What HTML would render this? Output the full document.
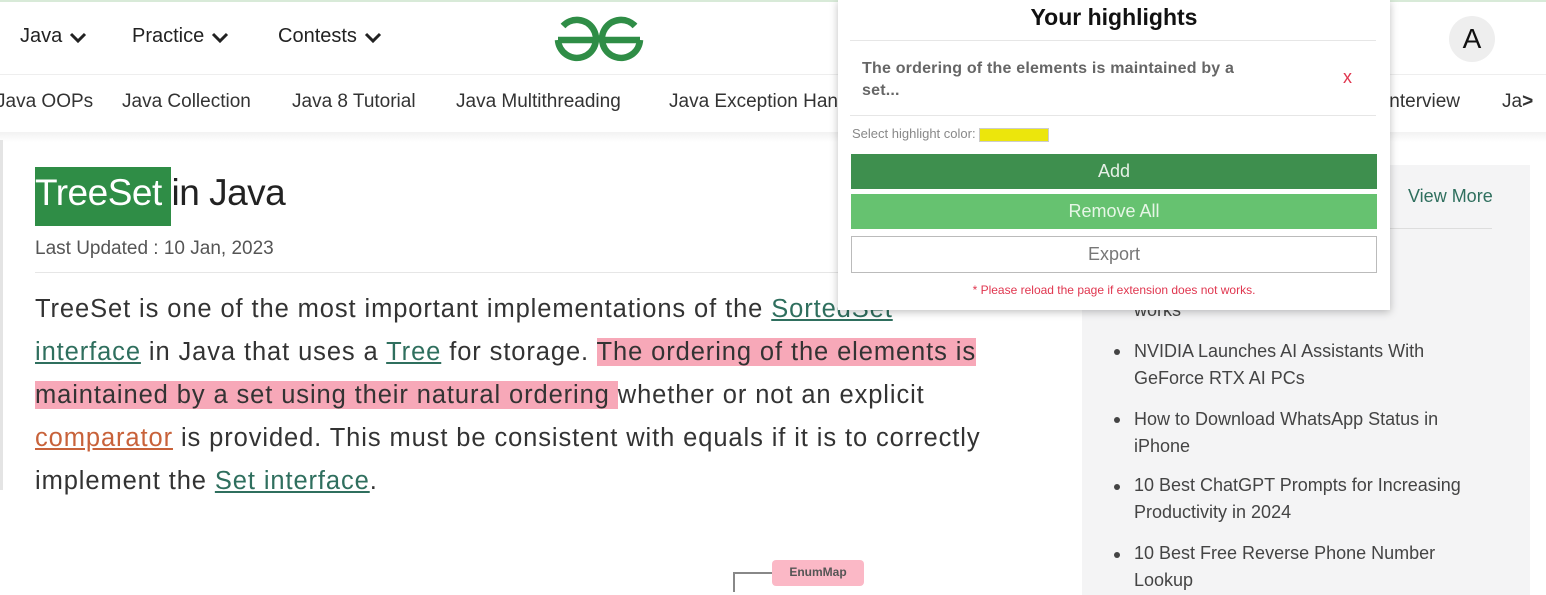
<!DOCTYPE html>
<html><head><meta charset="utf-8"><style>
*{margin:0;padding:0;box-sizing:border-box}
body{width:1546px;height:584px;overflow:hidden;background:#fff;font-family:"Liberation Sans",sans-serif;position:relative;color:#222}
.a{position:absolute;white-space:nowrap}
.nav{font-size:20px;color:#222;top:25px}
.sub{font-size:19px;color:#333;top:91px}
.p{font-size:25.5px;letter-spacing:0.9px;color:#333;left:35px}
u{color:#2f6f5e;text-decoration:underline}
.hl{background:#f7a8b8}
.side{font-size:18px;color:#444;line-height:27px}
.bul{position:absolute;width:6px;height:6px;border-radius:50%;background:#444}
.chev{display:inline-block;vertical-align:middle;margin-left:6px}
</style></head><body>
<div class="a" style="left:0;top:0;width:1546px;height:2px;background:#d8ead8"></div>
<div class="a nav" style="left:20px">Java<svg class="chev" width="20" height="14" viewBox="0 0 20 14"><path d="M3 4 L10 11 L17 4" fill="none" stroke="#222" stroke-width="3"/></svg></div>
<div class="a nav" style="left:132px">Practice<svg class="chev" width="20" height="14" viewBox="0 0 20 14"><path d="M3 4 L10 11 L17 4" fill="none" stroke="#222" stroke-width="3"/></svg></div>
<div class="a nav" style="left:278px">Contests<svg class="chev" width="20" height="14" viewBox="0 0 20 14"><path d="M3 4 L10 11 L17 4" fill="none" stroke="#222" stroke-width="3"/></svg></div>
<svg class="a" style="left:553px;top:13px" width="92" height="50" viewBox="0 0 92 50"><g fill="none" stroke="#2f8d46" stroke-width="6.5"><path d="M5 27 H43"/><path d="M10 13 A19 19 0 1 1 5 27"/><path d="M49 27 H87"/><path d="M82 13 A19 19 0 1 0 87 27"/></g></svg>
<div class="a" style="left:1449px;top:16px;width:46px;height:46px;border-radius:50%;background:#eee;font-size:28px;text-align:center;line-height:46px;color:#111">A</div>
<div class="a" style="left:0;top:74px;width:1546px;height:1px;background:#eee"></div>
<div class="a sub" style="left:-4px">Java OOPs</div>
<div class="a sub" style="left:122px">Java Collection</div>
<div class="a sub" style="left:292px">Java 8 Tutorial</div>
<div class="a sub" style="left:456px">Java Multithreading</div>
<div class="a sub" style="left:669px">Java Exception Handling</div>
<div class="a sub" style="left:1384px">Interview</div>
<div class="a sub" style="left:1502px">Ja<b>&gt;</b></div>
<div class="a" style="left:0;top:132px;width:1546px;height:10px;background:linear-gradient(#f2f2f2,#fff)"></div>
<div class="a" style="left:0;top:140px;width:3px;height:350px;background:#e4e4e4"></div>
<div class="a" style="left:35px;top:167px;width:136px;height:59px;background:#2f8d46"></div>
<div class="a" style="left:35px;top:172px;font-size:37px;color:#fff;letter-spacing:-0.5px">TreeSet<span style="color:#222"> in Java</span></div>
<div class="a" style="left:35px;top:238px;font-size:19px;color:#555">Last Updated : 10 Jan, 2023</div>
<div class="a" style="left:35px;top:272px;width:1030px;height:1px;background:#e6e6e6"></div>
<div class="a p" style="top:295px">TreeSet is one of the most important implementations of the <u>SortedSet</u></div>
<div class="a p" style="top:338px"><u>interface</u> in Java that uses a <u>Tree</u> for storage. <span class="hl">The ordering of the elements is</span></div>
<div class="a p" style="top:381px"><span class="hl">maintained by a set using their natural ordering </span>whether or not an explicit</div>
<div class="a p" style="top:424px"><u style="color:#c8623a">comparator</u> is provided. This must be consistent with equals if it is to correctly</div>
<div class="a p" style="top:467px">implement the <u>Set interface</u>.</div>
<div class="a" style="left:733px;top:572px;width:40px;height:20px;border-left:2px solid #888;border-top:2px solid #888"></div>
<div class="a" style="left:772px;top:560px;width:92px;height:26px;background:#fbb8c6;border-radius:4px;font-size:12px;text-align:center;line-height:24px;color:#555;font-weight:bold">EnumMap</div>
<div class="a" style="left:1082px;top:165px;width:448px;height:430px;background:#f4f4f5"></div>
<div class="a" style="left:1408px;top:186px;font-size:18px;color:#2f6f5e">View More</div>
<div class="a" style="left:1100px;top:228px;width:392px;height:1px;background:#ddd"></div>
<div class="a side" style="left:1134px;top:243px">you for<br>and how it<br>works</div>
<div class="bul" style="left:1114px;top:349px"></div>
<div class="a side" style="left:1134px;top:338px">NVIDIA Launches AI Assistants With<br>GeForce RTX AI PCs</div>
<div class="bul" style="left:1114px;top:417px"></div>
<div class="a side" style="left:1134px;top:406px">How to Download WhatsApp Status in<br>iPhone</div>
<div class="bul" style="left:1114px;top:484px"></div>
<div class="a side" style="left:1134px;top:472px">10 Best ChatGPT Prompts for Increasing<br>Productivity in 2024</div>
<div class="bul" style="left:1114px;top:552px"></div>
<div class="a side" style="left:1134px;top:540px">10 Best Free Reverse Phone Number<br>Lookup</div>
<!-- popup -->
<div class="a" style="left:838px;top:0;width:552px;height:310px;background:#fff;box-shadow:0 2px 8px rgba(0,0,0,.25)">
<div class="a" style="left:0;width:552px;top:4px;text-align:center;font-size:23px;font-weight:bold;color:#111">Your highlights</div>
<div class="a" style="left:12px;top:40px;width:526px;height:1px;background:#e6e6e6"></div>
<div class="a" style="left:24px;top:58px;font-size:16px;font-weight:bold;color:#666;line-height:22px;letter-spacing:0.2px">The ordering of the elements is maintained by a<br>set...</div>
<div class="a" style="left:505px;top:67px;font-size:18px;color:#e0364f">x</div>
<div class="a" style="left:12px;top:115px;width:526px;height:1px;background:#e6e6e6"></div>
<div class="a" style="left:14px;top:126px;font-size:13px;color:#888">Select highlight color: <span style="display:inline-block;width:70px;height:14px;background:#ece60c;vertical-align:middle;border:1px solid #ccc"></span></div>
<div class="a" style="left:13px;top:154px;width:526px;height:35px;background:#3e8f4e;color:#e6f0e6;font-size:18px;text-align:center;line-height:35px">Add</div>
<div class="a" style="left:13px;top:194px;width:526px;height:35px;background:#66c270;color:#e6f6e6;font-size:18px;text-align:center;line-height:35px">Remove All</div>
<div class="a" style="left:13px;top:236px;width:526px;height:37px;border:1px solid #bbb;color:#777;font-size:18px;text-align:center;line-height:35px">Export</div>
<div class="a" style="left:0;width:552px;top:283px;text-align:center;font-size:12px;color:#e0364f">* Please reload the page if extension does not works.</div>
</div>
</body></html>
